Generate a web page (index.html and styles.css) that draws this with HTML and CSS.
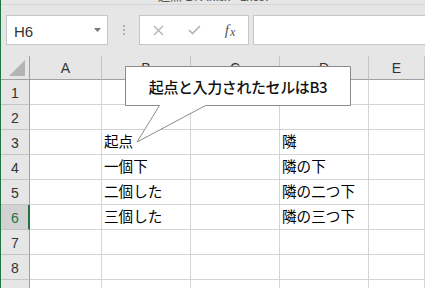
FILE: index.html
```html
<!DOCTYPE html>
<html lang="ja">
<head>
    <meta charset="UTF-8">
    <meta name="viewport" content="width=device-width, initial-scale=1.0">
    <title>起点セル</title>
    <link rel="stylesheet" href="styles.css">
</head>
<body>

<div id="titlebar">
    <div class="title_text">起点セル.xlsx - Excel</div>
</div>

<div id="formulabar">
    <div class="namebox">
        <span>H6</span>
        <svg class="drop" width="7" height="4" viewBox="0 0 7 4"><path d="M0 0H7L3.5 4Z" fill="#7a7a7a"/></svg>
    </div>
    <div class="grip">
        <i></i><i></i><i></i>
    </div>
    <div class="buttons">
        <div class="btn">
            <svg width="11" height="11" viewBox="0 0 11 11"><path d="M1 1L10 10M10 1L1 10" stroke="#b4b4b4" stroke-width="1.4" fill="none"/></svg>
        </div>
        <div class="btn">
            <svg width="13" height="10" viewBox="0 0 13 10"><path d="M1 5L4.5 8.5L12 1" stroke="#b4b4b4" stroke-width="1.6" fill="none"/></svg>
        </div>
        <div class="btn fx"><i>f</i><i class="x">x</i></div>
    </div>
    <div class="input"></div>
</div>

<div id="sheet">
    <div class="row head">
        <div class="corner"><svg width="18" height="18" viewBox="0 0 18 18"><path d="M17 1V17H1Z" fill="#b4b4b4"/></svg></div>
        <div class="col">A</div>
        <div class="col">B</div>
        <div class="col">C</div>
        <div class="col">D</div>
        <div class="col">E</div>
    </div>
    <div class="row">
        <div class="num">1</div><div class="cell"></div><div class="cell"></div><div class="cell"></div><div class="cell"></div><div class="cell"></div>
    </div>
    <div class="row">
        <div class="num">2</div><div class="cell"></div><div class="cell"></div><div class="cell"></div><div class="cell"></div><div class="cell"></div>
    </div>
    <div class="row">
        <div class="num">3</div><div class="cell"></div><div class="cell">起点</div><div class="cell"></div><div class="cell">隣</div><div class="cell"></div>
    </div>
    <div class="row">
        <div class="num">4</div><div class="cell"></div><div class="cell">一個下</div><div class="cell"></div><div class="cell">隣の下</div><div class="cell"></div>
    </div>
    <div class="row">
        <div class="num">5</div><div class="cell"></div><div class="cell">二個した</div><div class="cell"></div><div class="cell">隣の二つ下</div><div class="cell"></div>
    </div>
    <div class="row">
        <div class="num active">6</div><div class="cell"></div><div class="cell">三個した</div><div class="cell"></div><div class="cell">隣の三つ下</div><div class="cell"></div>
    </div>
    <div class="row">
        <div class="num">7</div><div class="cell"></div><div class="cell"></div><div class="cell"></div><div class="cell"></div><div class="cell"></div>
    </div>
    <div class="row">
        <div class="num">8</div><div class="cell"></div><div class="cell"></div><div class="cell"></div><div class="cell"></div><div class="cell"></div>
    </div>
    <div class="row">
        <div class="num"></div><div class="cell"></div><div class="cell"></div><div class="cell"></div><div class="cell"></div><div class="cell"></div>
    </div>

    <!-- 吹き出し -->
    <div class="callout">
        <svg width="227" height="78" viewBox="0 0 227 78">
            <path d="M0.5 0.5H225.5V39.5H80.5L12 76L34.5 39.5H0.5Z" fill="#fff" stroke="#8a8a8a" stroke-width="1"/>
        </svg>
        <div class="callout_text">起点と入力されたセルはB3</div>
    </div>
</div>

</body>
</html>
```

FILE: styles.css
```css
html, body{
    margin: 0;
    padding: 0;
}
body{
    width: 425px;
    height: 288px;
    overflow: hidden;
    box-sizing: border-box;
    background-color: #e6e6e6;
    border-left: 1px solid #217346;
    font-family: "Liberation Sans", "Noto Sans CJK JP", sans-serif;
}
#titlebar{
    height: 4px;
    overflow: hidden;
    border-bottom: 1px solid #d4d4d4;
}
.title_text{
    margin-top: -11px;
    text-align: center;
    font-size: 12px;
    line-height: 14px;
    color: #555;
    font-family: "Noto Sans CJK JP", sans-serif;
}
#formulabar{
    display: flex;
    height: 30px;
    padding: 10px 0 0 5px;
}
.namebox{
    width: 102px;
    box-sizing: border-box;
    background-color: #fff;
    border: 1px solid #c6c6c6;
    display: flex;
    align-items: center;
    justify-content: space-between;
    padding: 3px 6px 0 7px;
    font-size: 15px;
    color: #333;
}
.drop{
    margin-top: -4px;
}
.grip{
    width: 31px;
    display: flex;
    flex-direction: column;
    align-items: center;
    gap: 2px;
    padding-top: 10px;
    box-sizing: border-box;
}
.grip i{
    display: block;
    width: 2px;
    height: 2px;
    background-color: #b0b0b0;
}
.buttons{
    width: 110px;
    box-sizing: border-box;
    background-color: #fff;
    border: 1px solid #c6c6c6;
    display: flex;
}
.btn{
    width: 36px;
    display: flex;
    align-items: center;
    justify-content: center;
}
.fx{
    font-family: "Liberation Serif", serif;
    font-size: 15px;
    color: #555;
    padding-top: 1px;
}
.fx .x{
    font-size: 12px;
    margin-left: 1px;
    margin-top: 3px;
}
.input{
    flex: 1;
    margin-left: 4px;
    margin-right: -2px;
    background-color: #fff;
    border: 1px solid #c6c6c6;
}
#sheet{
    position: relative;
    margin-top: 11px;
}
.row{
    display: grid;
    grid-template-columns: 29px 72px 89px 89px 89px 1fr;
    height: 25px;
}
.row.head{
    height: 24px;
}
.corner, .col{
    box-sizing: border-box;
    background-color: #e6e6e6;
    border-bottom: 1px solid #a0a0a0;
    border-right: 1px solid #c4c4c4;
}
.corner{
    border-right-color: #a0a0a0;
    display: flex;
    align-items: flex-end;
    justify-content: flex-end;
    padding: 0 3px 2px 0;
}
.col{
    display: flex;
    align-items: center;
    justify-content: center;
    font-size: 14px;
    color: #333;
}
.num{
    box-sizing: border-box;
    background-color: #e6e6e6;
    border-right: 1px solid #a0a0a0;
    border-bottom: 1px solid #c4c4c4;
    display: flex;
    align-items: center;
    justify-content: center;
    font-size: 14px;
    color: #333;
    padding-top: 1px;
}
.num.active{
    background-color: #d2d2d2;
    border-right: 2px solid #217346;
    color: #217346;
    padding-left: 1px;
}
.cell{
    box-sizing: border-box;
    background-color: #fff;
    border-right: 1px solid #d4d4d4;
    border-bottom: 1px solid #d4d4d4;
    display: flex;
    align-items: center;
    padding: 0 0 2px 2px;
    font-family: "Noto Sans CJK JP", sans-serif;
    font-size: 14.6px;
    line-height: 1;
    color: #000;
    white-space: nowrap;
}
.callout{
    position: absolute;
    left: 124px;
    top: 10px;
    width: 227px;
    height: 78px;
}
.callout svg{
    display: block;
}
.callout_text{
    position: absolute;
    left: 0;
    top: 0;
    width: 226px;
    height: 40px;
    display: flex;
    align-items: center;
    justify-content: center;
    font-family: "Noto Sans CJK JP", sans-serif;
    font-size: 15px;
    font-weight: 500;
    letter-spacing: -0.4px;
    color: #111;
}
```
